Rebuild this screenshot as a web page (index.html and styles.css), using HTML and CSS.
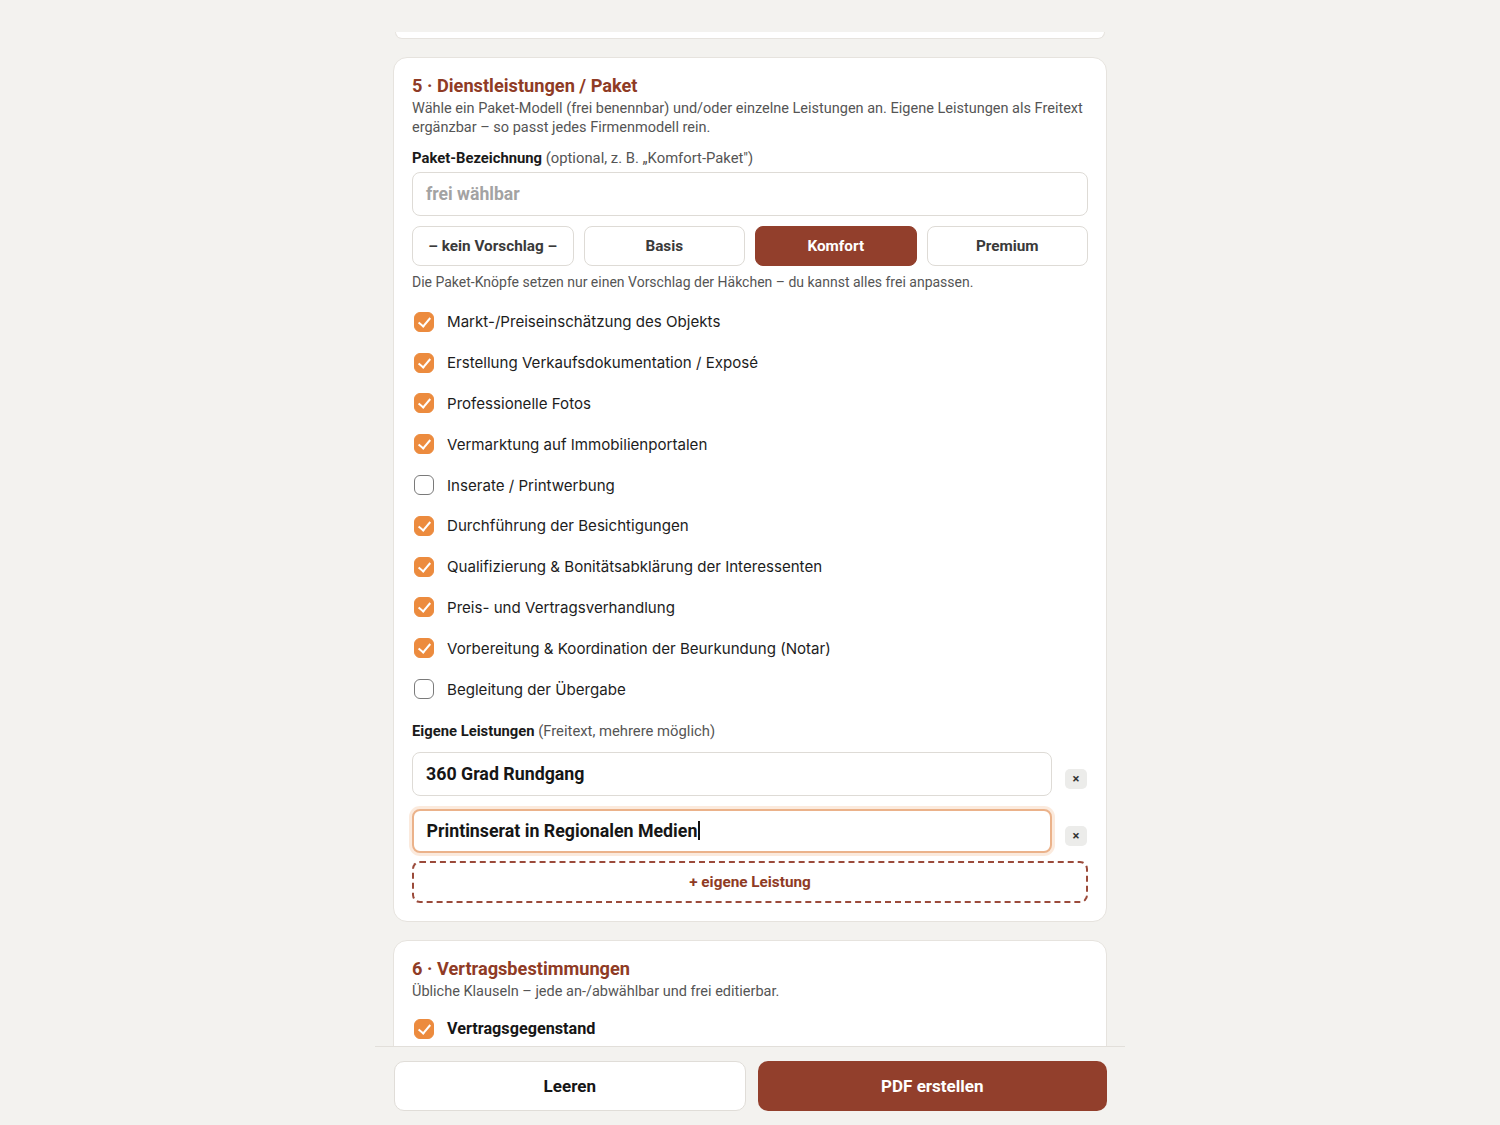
FILE: index.html
```html
<!DOCTYPE html>
<html lang="de">
<head>
<meta charset="utf-8">
<title>Dienstleistungen</title>
<link rel="stylesheet" href="styles.css">
</head>
<body>
<div class="page">
  <div class="topbar"></div>
  <div class="card-tail"></div>

  <section class="card">
    <h2 class="card-title">5 · Dienstleistungen / Paket</h2>
    <p class="card-desc">Wähle ein Paket-Modell (frei benennbar) und/oder einzelne Leistungen an. Eigene Leistungen als Freitext ergänzbar – so passt jedes Firmenmodell rein.</p>

    <div class="label"><b>Paket-Bezeichnung</b> (optional, z. B. „Komfort-Paket")</div>
    <div class="input placeholder">frei wählbar</div>

    <div class="pkg-row">
      <div class="pkg">– kein Vorschlag –</div>
      <div class="pkg">Basis</div>
      <div class="pkg active">Komfort</div>
      <div class="pkg">Premium</div>
    </div>
    <p class="hint">Die Paket-Knöpfe setzen nur einen Vorschlag der Häkchen – du kannst alles frei anpassen.</p>

    <ul class="checklist">
      <li class="on"><span class="box"></span>Markt-/Preiseinschätzung des Objekts</li>
      <li class="on"><span class="box"></span>Erstellung Verkaufsdokumentation / Exposé</li>
      <li class="on"><span class="box"></span>Professionelle Fotos</li>
      <li class="on"><span class="box"></span>Vermarktung auf Immobilienportalen</li>
      <li><span class="box"></span>Inserate / Printwerbung</li>
      <li class="on"><span class="box"></span>Durchführung der Besichtigungen</li>
      <li class="on"><span class="box"></span>Qualifizierung &amp; Bonitätsabklärung der Interessenten</li>
      <li class="on"><span class="box"></span>Preis- und Vertragsverhandlung</li>
      <li class="on"><span class="box"></span>Vorbereitung &amp; Koordination der Beurkundung (Notar)</li>
      <li><span class="box"></span>Begleitung der Übergabe</li>
    </ul>

    <div class="label label-own"><b>Eigene Leistungen</b> (Freitext, mehrere möglich)</div>
    <div class="own-row">
      <div class="input value">360 Grad Rundgang</div>
      <div class="xbtn">×</div>
    </div>
    <div class="own-row">
      <div class="input value focused">Printinserat in Regionalen Medien<span class="caret"></span></div>
      <div class="xbtn">×</div>
    </div>
    <div class="add-btn">+ eigene Leistung</div>
  </section>

  <section class="card card6">
    <h2 class="card-title">6 · Vertragsbestimmungen</h2>
    <p class="card-desc">Übliche Klauseln – jede an-/abwählbar und frei editierbar.</p>
    <ul class="checklist bold">
      <li class="on"><span class="box"></span>Vertragsgegenstand</li>
    </ul>
  </section>
</div>

<div class="bottombar">
  <div class="btn btn-light">Leeren</div>
  <div class="btn btn-primary">PDF erstellen</div>
</div>
</body>
</html>
```

FILE: styles.css
```css
* { box-sizing: border-box; }
html, body { margin: 0; padding: 0; }
body {
  background: #f3f2ef;
  font-family: Roboto, "Liberation Sans", sans-serif;
  color: #1f1f1f;
  height: 1125px;
  overflow: hidden;
}
.page {
  width: 750px;
  margin: 0 auto;
  padding: 0 18px;
}
.topbar {
  height: 32px;
}
.card-tail {
  height: 7px;
  background: #fff;
  border: 1px solid #e6e3de;
  border-top: none;
  border-radius: 0 0 12px 12px;
  margin: 0 2px;
}
.card {
  background: #fff;
  border: 1px solid #e6e3de;
  border-radius: 14px;
  padding: 17px 18px 18px;
  margin-top: 18px;
}
.card-title {
  margin: 0;
  font-size: 18.2px;
  line-height: 22px;
  font-weight: 700;
  color: #8f3b25;
}
.card-desc {
  margin: 2px 0 0;
  font-size: 14.5px;
  line-height: 19px;
  color: #555;
}
.label {
  margin-top: 12px;
  font-size: 14.8px;
  line-height: 18px;
  color: #555;
}
.label b { color: #1a1a1a; font-weight: 700; }
.input {
  margin-top: 5px;
  height: 44px;
  border: 1.5px solid #dedbd6;
  border-radius: 8px;
  padding: 0 13px;
  display: flex;
  align-items: center;
  font-size: 17.8px;
  font-weight: 700;
  background: #fff;
}
.placeholder { color: #a3a3a3; font-size: 17.6px; }
.value { color: #161616; }
.pkg-row {
  margin-top: 10px;
  display: grid;
  grid-template-columns: repeat(4, 1fr);
  gap: 10px;
}
.pkg {
  height: 40px;
  border: 1.5px solid #dedbd6;
  border-radius: 8px;
  display: flex;
  align-items: center;
  justify-content: center;
  font-size: 15.3px;
  font-weight: 700;
  color: #3a3a3a;
}
.pkg.active {
  background: #923f2c;
  border-color: #923f2c;
  color: #fff;
}
.hint {
  margin: 7px 0 0;
  font-size: 14px;
  line-height: 18px;
  color: #555;
}
.checklist {
  list-style: none;
  margin: 10px 0 0;
  padding: 0;
}
.checklist li {
  height: 40.8px;
  display: flex;
  align-items: center;
  gap: 13px;
  padding-left: 2px;
  padding-top: 1px;
  font-family: Inter, Roboto, sans-serif;
  font-size: 15.1px;
  color: #1d1d1d;
}
.box {
  width: 20px;
  height: 20px;
  border: 1.5px solid #7a7a7a;
  border-radius: 6px;
  flex: none;
  position: relative;
  background: #fff;
}
.on .box {
  background: #ec8b3e;
  border-color: #ec8b3e;
}
.on .box::after {
  content: "";
  position: absolute;
  left: 5.5px;
  top: 2px;
  width: 5px;
  height: 10px;
  border: solid #fff;
  border-width: 0 2px 2px 0;
  transform: rotate(40deg);
}
.checklist.bold li {
  font-family: Roboto, sans-serif;
  font-weight: 700;
  font-size: 16.2px;
  color: #161616;
}
.label-own { margin-top: 13px; }
.own-row {
  display: flex;
  align-items: center;
  gap: 13px;
  margin-top: 12px;
}
.own-row .input { margin-top: 0; flex: 1; }
.own-row + .own-row { margin-top: 13px; }
.focused {
  border: 2px solid #ebb28a;
  box-shadow: 0 0 0 3px rgba(236, 160, 100, 0.22);
  padding-left: 12.5px;
}
.caret {
  display: inline-block;
  width: 1.5px;
  height: 19px;
  background: #111;
  margin-left: 1px;
}
.xbtn {
  width: 22px;
  height: 20px;
  margin-top: 10px;
  border-radius: 5px;
  background: #ececea;
  color: #333;
  font-size: 13px;
  font-weight: 700;
  display: flex;
  align-items: center;
  justify-content: center;
  flex: none;
  margin-right: 1px;
}
.add-btn {
  margin-top: 8px;
  height: 42px;
  border: 2px dashed #9b4a3a;
  border-radius: 8px;
  display: flex;
  align-items: center;
  justify-content: center;
  font-size: 15.3px;
  font-weight: 700;
  color: #8f3b25;
}
.card6 {
  padding-bottom: 40px;
}
.card6 .checklist { margin-top: 7px; }
.bottombar {
  position: fixed;
  left: 50%;
  bottom: 0;
  transform: translateX(-50%);
  width: 750px;
  height: 79px;
  background: #f3f2ef;
  border-top: 1px solid #e2dfda;
  display: flex;
  gap: 12px;
  padding: 14px 18px 14px 19px;
}
.btn {
  flex: 1;
  height: 50px;
  border-radius: 10px;
  display: flex;
  align-items: center;
  justify-content: center;
  font-size: 17px;
  font-weight: 700;
}
.btn-light {
  background: #fff;
  border: 1.5px solid #e0ddd8;
  color: #161616;
}
.btn-primary {
  background: #923f2c;
  color: #fff;
}
```
